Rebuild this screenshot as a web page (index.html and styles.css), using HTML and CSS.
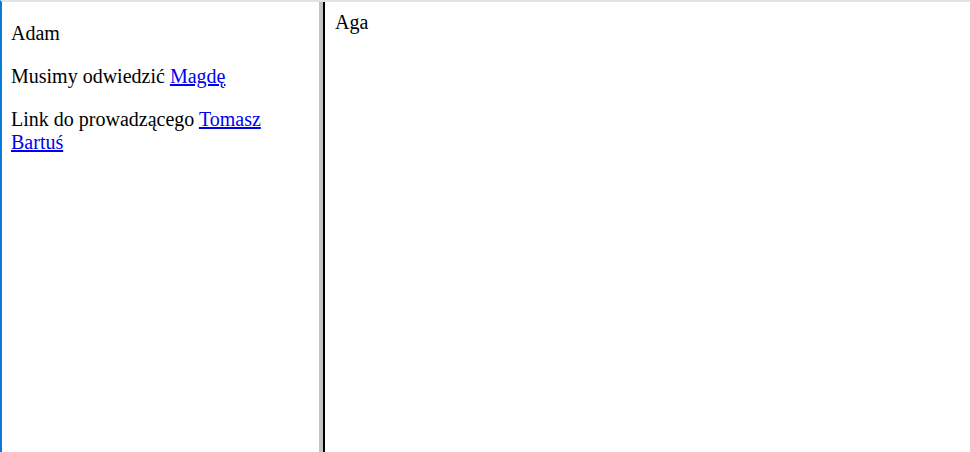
FILE: index.html
```html
<!DOCTYPE html>
<html lang="pl">
<head>
  <meta charset="UTF-8">
  <title>Ramki</title>
  <link rel="stylesheet" href="styles.css">
</head>
<body>
  <div class="frameset">
    <div class="frame frame-left">
      <p>Adam</p>
      <p>Musimy odwiedzić <a href="#">Magdę</a></p>
      <p>Link do prowadzącego <a href="#">Tomasz Bartuś</a></p>
    </div>
    <div class="splitter"></div>
    <div class="frame frame-right">
      Aga
    </div>
  </div>
</body>
</html>
```

FILE: styles.css
```css
html, body {
  margin: 0;
  padding: 0;
  height: 100%;
  background: #fff;
}

body {
  font-family: "Liberation Serif", "Times New Roman", serif;
  font-size: 20px;
  color: #000;
}

.frameset {
  display: flex;
  height: 100vh;
  box-sizing: border-box;
  border-top: 2px solid #e3e3e3;
  border-left: 2px solid #0a7ad8;
}

.frame {
  box-sizing: border-box;
  overflow: hidden;
}

.frame-left {
  width: 317px;
  padding: 0 10px 0 9px;
}

.frame-left p {
  margin: 20px 0;
}

.splitter {
  width: 4px;
  background: #c4c4c4;
  border-right: 2px solid #000;
}

.frame-right {
  flex: 1;
  padding: 9px 10px;
}

a {
  color: #0000ee;
}
```
